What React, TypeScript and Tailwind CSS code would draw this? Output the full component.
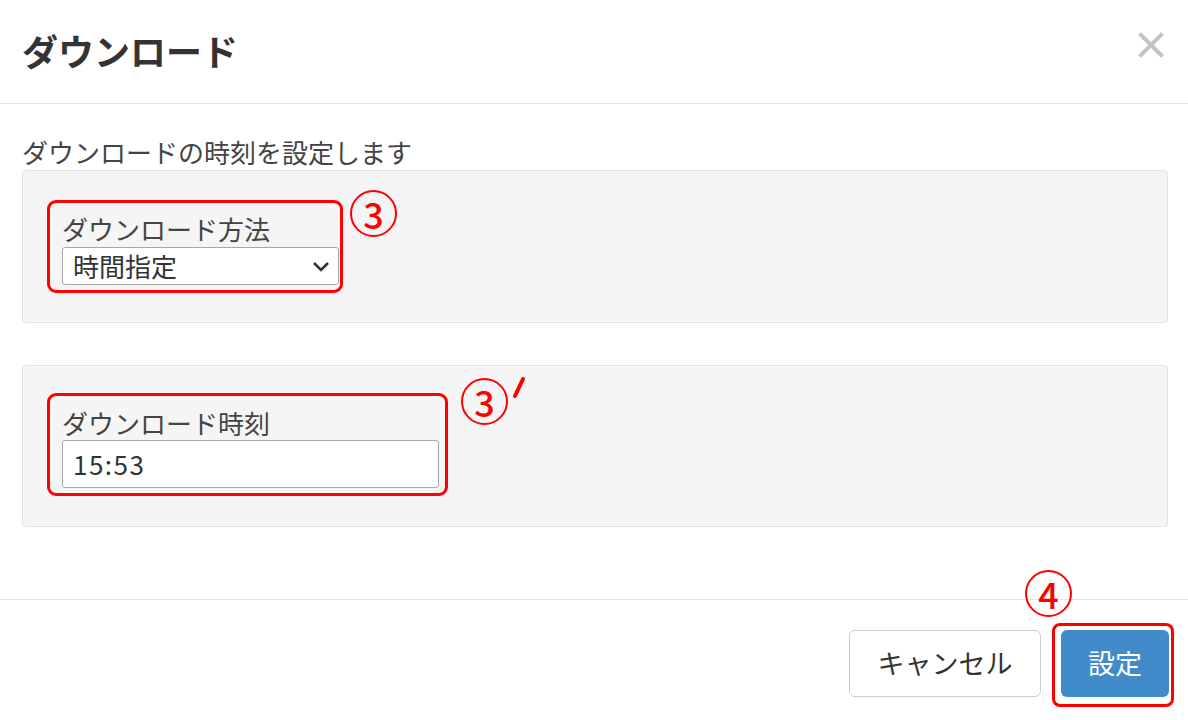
import React from "react";

const jp = { fontFamily: '"Noto Sans CJK JP", "Noto Sans", sans-serif' };

function Circled({ n, className }: { n: string; className: string }) {
  return (
    <span
      className={
        "absolute w-[47px] h-[47px] rounded-full border-[2px] border-[#ff0000] text-[#ff0000] flex items-center justify-center text-[36px] font-medium leading-none " +
        className
      }
    >
      <span className="-mt-[2px]">{n}</span>
    </span>
  );
}

export default function App() {
  return (
    <div className="w-[1188px] h-[720px] bg-white text-[#333] overflow-hidden" style={jp}>
      {/* Header */}
      <div className="h-[104px] border-b border-[#e5e5e5] flex items-center justify-between pl-[22px] pr-[24px]">
        <h1 className="text-[36px] font-bold leading-none text-[#333] -mt-[4px]">ダウンロード</h1>
        <svg width="26" height="26" viewBox="0 0 26 26" className="-mt-[14px]">
          <path d="M3 3 L23 23 M23 3 L3 23" stroke="#c4c4c4" strokeWidth="4" strokeLinecap="square" />
        </svg>
      </div>

      {/* Body */}
      <div className="pl-[22px] pr-[20px]">
        <p className="mt-[33px] text-[26px] leading-[30px] text-[#444]">ダウンロードの時刻を設定します</p>

        <div className="mt-[3px] h-[153px] bg-[#f5f5f5] border border-[#e3e3e3] rounded-[4px] pl-[24px] pt-[29px]">
          <div className="relative w-[296px] h-[93px] border-[3px] border-[#ff0000] rounded-[9px] pl-[12px] pr-[2px] pt-[11px]">
            <div className="text-[26px] leading-[30px] text-[#444] mb-[3px]">ダウンロード方法</div>
            <div className="w-[277px] h-[38px] bg-white border border-[#a8a8a8] rounded-[3px] flex items-center justify-between pl-[10px] pr-[8px]">
              <span className="text-[26px] leading-none text-[#333]">時間指定</span>
              <svg width="18" height="11" viewBox="0 0 18 11">
                <path d="M2 2 L9 9 L16 2" fill="none" stroke="#333" strokeWidth="2.6" />
              </svg>
            </div>
            <Circled n="3" className="left-[300px] -top-[13px]" />
          </div>
        </div>

        <div className="mt-[42px] h-[162px] bg-[#f5f5f5] border border-[#e3e3e3] rounded-[4px] pl-[24px] pt-[27px]">
          <div className="relative w-[401px] h-[103px] border-[3px] border-[#ff0000] rounded-[9px] pl-[12px] pr-[7px] pt-[12px]">
            <div className="text-[26px] leading-[30px] text-[#444] mb-[2px]">ダウンロード時刻</div>
            <div className="w-[377px] h-[48px] bg-white border border-[#a8a8a8] rounded-[3px] flex items-center pl-[10px]">
              <span className="text-[26px] leading-none text-[#333] tracking-[1.5px]">15:53</span>
            </div>
            <Circled n="3" className="left-[411px] -top-[18px]" />
            <svg width="16" height="22" viewBox="0 0 16 22" className="absolute left-[460px] -top-[19px]">
              <path d="M13 2 L5 19" stroke="#ff0000" strokeWidth="4" strokeLinecap="round" />
            </svg>
          </div>
        </div>
      </div>

      {/* Footer */}
      <div className="mt-[72px] border-t border-[#e5e5e5] pt-[30px] pr-[19px] flex justify-end gap-[20px]">
        <button className="w-[192px] h-[67px] bg-white border border-[#cccccc] rounded-[6px] text-[27px] text-[#333] flex items-center justify-center">
          キャンセル
        </button>
        <div className="relative">
          <button className="w-[108px] h-[67px] bg-[#428bca] rounded-[6px] text-[27px] text-white flex items-center justify-center">
            設定
          </button>
          <div className="absolute -left-[9px] -right-[5px] -top-[7px] -bottom-[10px] border-[3px] border-[#ff0000] rounded-[8px] pointer-events-none" />
          <Circled n="4" className="-left-[36px] -top-[60px]" />
        </div>
      </div>
    </div>
  );
}
